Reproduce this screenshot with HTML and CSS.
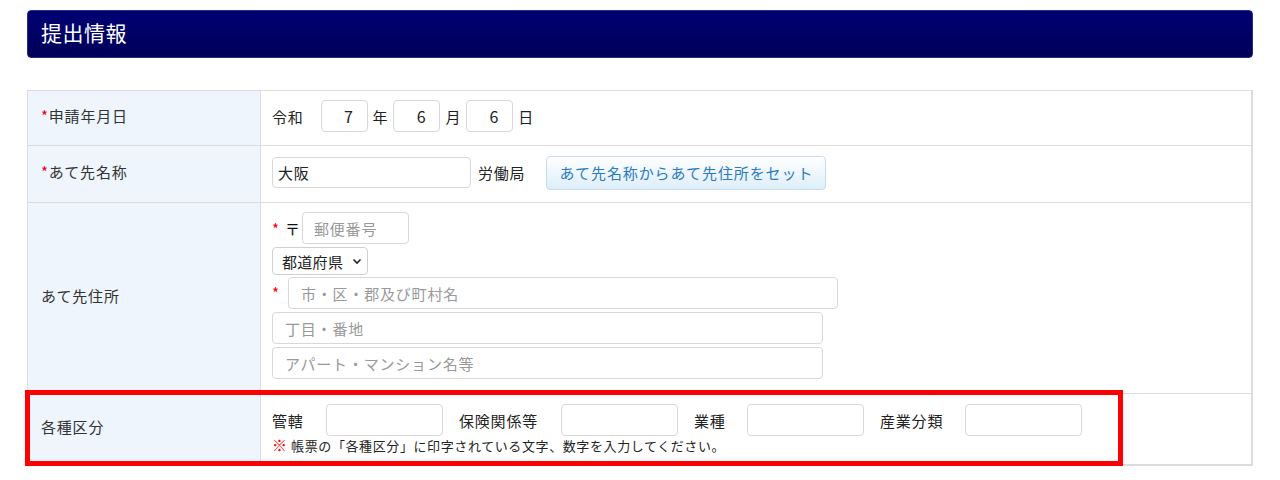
FILE: index.html
```html
<!DOCTYPE html>
<html lang="ja">
<head>
<meta charset="utf-8">
<link rel="stylesheet" href="styles.css">
</head>
<body>
<div class="page">
  <h2 class="section-title">提出情報</h2>
  <div class="form-table">
    <div class="row r1">
      <div class="label"><span class="req">*</span>申請年月日</div>
      <div class="cell inline">
        <span class="txt era">令和</span>
        <input class="num" type="text" value="7">
        <span class="txt">年</span>
        <input class="num" type="text" value="6">
        <span class="txt">月</span>
        <input class="num" type="text" value="6">
        <span class="txt">日</span>
      </div>
    </div>
    <div class="row r2">
      <div class="label"><span class="req">*</span>あて先名称</div>
      <div class="cell inline">
        <input class="name" type="text" value="大阪">
        <span class="txt bureau">労働局</span>
        <button class="btn">あて先名称からあて先住所をセット</button>
      </div>
    </div>
    <div class="row r3">
      <div class="label">あて先住所</div>
      <div class="cell stack">
        <div class="line"><span class="req sm">*</span><span class="zipmark">〒</span><input class="zip" type="text" placeholder="郵便番号"></div>
        <div class="line"><div class="select">都道府県<svg width="10" height="7" viewBox="0 0 10 7"><path d="M1.5 1.5 5 5 8.5 1.5" fill="none" stroke="#222" stroke-width="1.6"/></svg></div></div>
        <div class="line"><span class="req sm w">*</span><input class="city" type="text" placeholder="市・区・郡及び町村名"></div>
        <div class="line"><input class="addr" type="text" placeholder="丁目・番地"></div>
        <div class="line"><input class="addr" type="text" placeholder="アパート・マンション名等"></div>
      </div>
    </div>
    <div class="row r4">
      <div class="label">各種区分</div>
      <div class="cell stack4">
        <div class="inline4">
          <span class="txt k1">管轄</span><input class="kbn" type="text">
          <span class="txt k2">保険関係等</span><input class="kbn" type="text">
          <span class="txt k3">業種</span><input class="kbn" type="text">
          <span class="txt k4">産業分類</span><input class="kbn" type="text">
        </div>
        <div class="note"><span class="kome">※</span> 帳票の「各種区分」に印字されている文字、数字を入力してください。</div>
      </div>
      <div class="highlight"></div>
    </div>
  </div>
</div>
</body>
</html>
```

FILE: styles.css
```css
* { box-sizing: border-box; }
body {
  margin: 0;
  font-family: "Noto Sans CJK JP", "Noto Sans", sans-serif;
  color: #333;
  background: #fff;
}
.page { padding: 10px 27px 0 27px; }
.section-title {
  margin: 0;
  height: 48px;
  background: linear-gradient(#000074, #000058);
  border: 1px solid #2a2a80;
  border-radius: 4px;
  color: #fff;
  font-size: 21px;
  letter-spacing: 0.5px;
  font-weight: normal;
  line-height: 42px;
  padding-left: 13px;
}
.form-table {
  margin-top: 32px;
  border: 1px solid #dcdcdc;
  border-bottom-width: 2px;
  border-right-width: 2px;
}
.row {
  display: grid;
  grid-template-columns: 233px 1fr;
  border-top: 1px solid #dcdcdc;
  position: relative;
}
.row:first-child { border-top: none; }
.r1 { height: 54px; }
.r2 { height: 57px; }
.r3 { height: 191px; }
.r4 { height: 71px; }
.label {
  background: #eef5fc;
  border-right: 1px solid #dcdcdc;
  font-size: 15px;
  letter-spacing: 0.8px;
  display: flex;
  align-items: center;
  padding-left: 13px;
  padding-bottom: 5px;
  color: #333;
}
.req { color: #e8000b; }
.cell { padding-left: 11px; font-size: 15px; letter-spacing: 0.8px; color: #222; }
.inline { display: flex; align-items: center; }
.r1 .cell { padding-bottom: 4px; }
.r2 .cell { padding-bottom: 3px; }
.txt { white-space: nowrap; }
input {
  font-family: inherit;
  font-size: 15px;
  letter-spacing: 0.8px;
  border: 1px solid #d8d8d8;
  border-radius: 4px;
  color: #222;
  background: #fff;
  outline: none;
  margin: 0;
}
input::placeholder { color: #999; }
.num {
  width: 47px; height: 32px;
  text-align: right;
  padding-right: 13px;
  margin: 0 5px;
  font-size: 16px;
}
.era { margin-right: 12px; }
.name { width: 199px; height: 31px; padding-left: 5px; }
.bureau { margin-left: 7px; }
.btn {
  margin-left: 21px;
  width: 280px; height: 34px;
  font-family: inherit;
  font-size: 15px;
  letter-spacing: 0.9px;
  color: #2b7bbf;
  background: linear-gradient(#ffffff, #ddeef9);
  border: 1px solid #c9dbe8;
  border-radius: 4px;
  padding: 0;
}
.stack { padding-top: 9px; display: flex; flex-direction: column; }
.line { display: flex; align-items: center; }
.req.sm { font-size: 15px; width: 13px; }
.req.w { width: 16px; }
.zipmark { margin-right: 2px; font-size: 15px; color: #111; letter-spacing: 0; }
.zip { width: 107px; height: 32px; padding-left: 11px; }
.select {
  margin-top: 3px;
  width: 96px; height: 28px;
  border: 1px solid #d0d0d0;
  border-radius: 4px;
  display: flex; align-items: center; justify-content: space-between;
  padding: 0 5px 0 9px;
  font-size: 15px;
  letter-spacing: 0.3px;
  color: #222;
}
.city { margin-top: 2px; width: 550px; height: 32px; padding-left: 12px; }
.addr { margin-top: 3px; width: 551px; height: 32px; padding-left: 12px; }
.stack4 { padding-top: 10px; }
.inline4 { display: flex; align-items: center; }
.kbn { width: 117px; height: 32px; margin-right: 16px; }
.k1 { width: 54px; }
.k2 { width: 102px; }
.k3 { width: 53px; }
.k4 { width: 85px; }
.inline4 .txt { color: #222; }
.note { font-size: 13px; letter-spacing: 0.6px; margin-top: 0; line-height: 18px; color: #222; }
.kome { color: #ff0000; font-weight: 900; font-size: 15px; }
.highlight {
  position: absolute;
  left: -3px; top: -4px;
  width: 1098px; height: 76px;
  border: 5px solid #ff0000;
  pointer-events: none;
}
```
